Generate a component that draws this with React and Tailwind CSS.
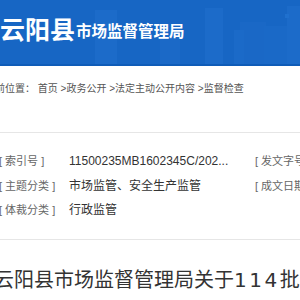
import React from "react";

const rows = [
  { label: "[ 索引号 ]", value: "11500235MB1602345C/202...", right: "[ 发文字号" },
  { label: "[ 主题分类 ]", value: "市场监管、安全生产监管", right: "[ 成文日期" },
  { label: "[ 体裁分类 ]", value: "行政监管", right: "" },
];

function Skyline() {
  // faint city silhouette behind the header
  return (
    <svg className="absolute inset-0" width="300" height="64" viewBox="0 0 300 64">
      <rect x="95" y="10" width="22" height="54" fill="#1c6bc9" />
      <rect x="205" y="8" width="18" height="56" fill="#1c6bc9" />
      <rect x="240" y="22" width="26" height="42" fill="#1a68c6" />
      <rect x="234" y="30" width="10" height="34" fill="#1b6ac8" />
      <rect x="264" y="26" width="36" height="38" fill="#1a69c7" />
      <rect x="287" y="6" width="13" height="58" fill="#1c6bc9" />
      <rect x="285" y="14" width="4" height="4" fill="#1f70ce" />
      <rect x="160" y="30" width="20" height="34" fill="#1b69c7" />
    </svg>
  );
}

export default function App() {
  return (
    <div
      className="w-[300px] h-[300px] overflow-hidden bg-white"
      style={{ fontFamily: '"Liberation Sans", "Noto Sans CJK SC", sans-serif' }}
    >
      {/* header */}
      <div className="relative h-[66px] bg-[#1766c4] border-b-2 border-[#0f5cb8]">
        <Skyline />
        <div className="relative flex items-end pt-[12px] text-white font-bold whitespace-nowrap">
          <span className="text-[25px] leading-[36px]">云阳县</span>
          <span className="text-[15.5px] leading-[22px] ml-[1px] mb-[5px]">市场监督管理局</span>
        </div>
      </div>

      {/* breadcrumb */}
      <div className="ml-[-15px] mt-[15px] h-[16px] text-[10px] leading-[16px] text-[#555] whitespace-nowrap">
        当前位置：&nbsp;首页 &gt;政务公开 &gt;法定主动公开内容 &gt;监督检查
      </div>

      <div className="mt-[35px] border-t border-[#e6e6e6]" />

      {/* meta table */}
      <div className="pt-[20px] flex flex-col gap-[8.5px] leading-[16px] whitespace-nowrap">
        {rows.map((r) => (
          <div key={r.label} className="flex items-center ml-[-1px]">
            <div className="w-[70px] shrink-0 text-[11px] text-[#666]">{r.label}</div>
            <div className="w-[186px] shrink-0 text-[12px] text-[#333]">{r.value}</div>
            <div className="shrink-0 text-[11px] text-[#666]">{r.right}</div>
          </div>
        ))}
      </div>

      <div className="mt-[21px] border-t border-[#e6e6e6]" />

      {/* title */}
      <div className="ml-[-6px] mt-[28px] text-[20px] leading-[24px] text-[#333] whitespace-nowrap">
        云阳县市场监督管理局关于
        <span className="tracking-[2.5px]" style={{ fontFamily: '"DejaVu Sans", sans-serif' }}>114</span>
        批次食品抽检情况的通告
      </div>
    </div>
  );
}
